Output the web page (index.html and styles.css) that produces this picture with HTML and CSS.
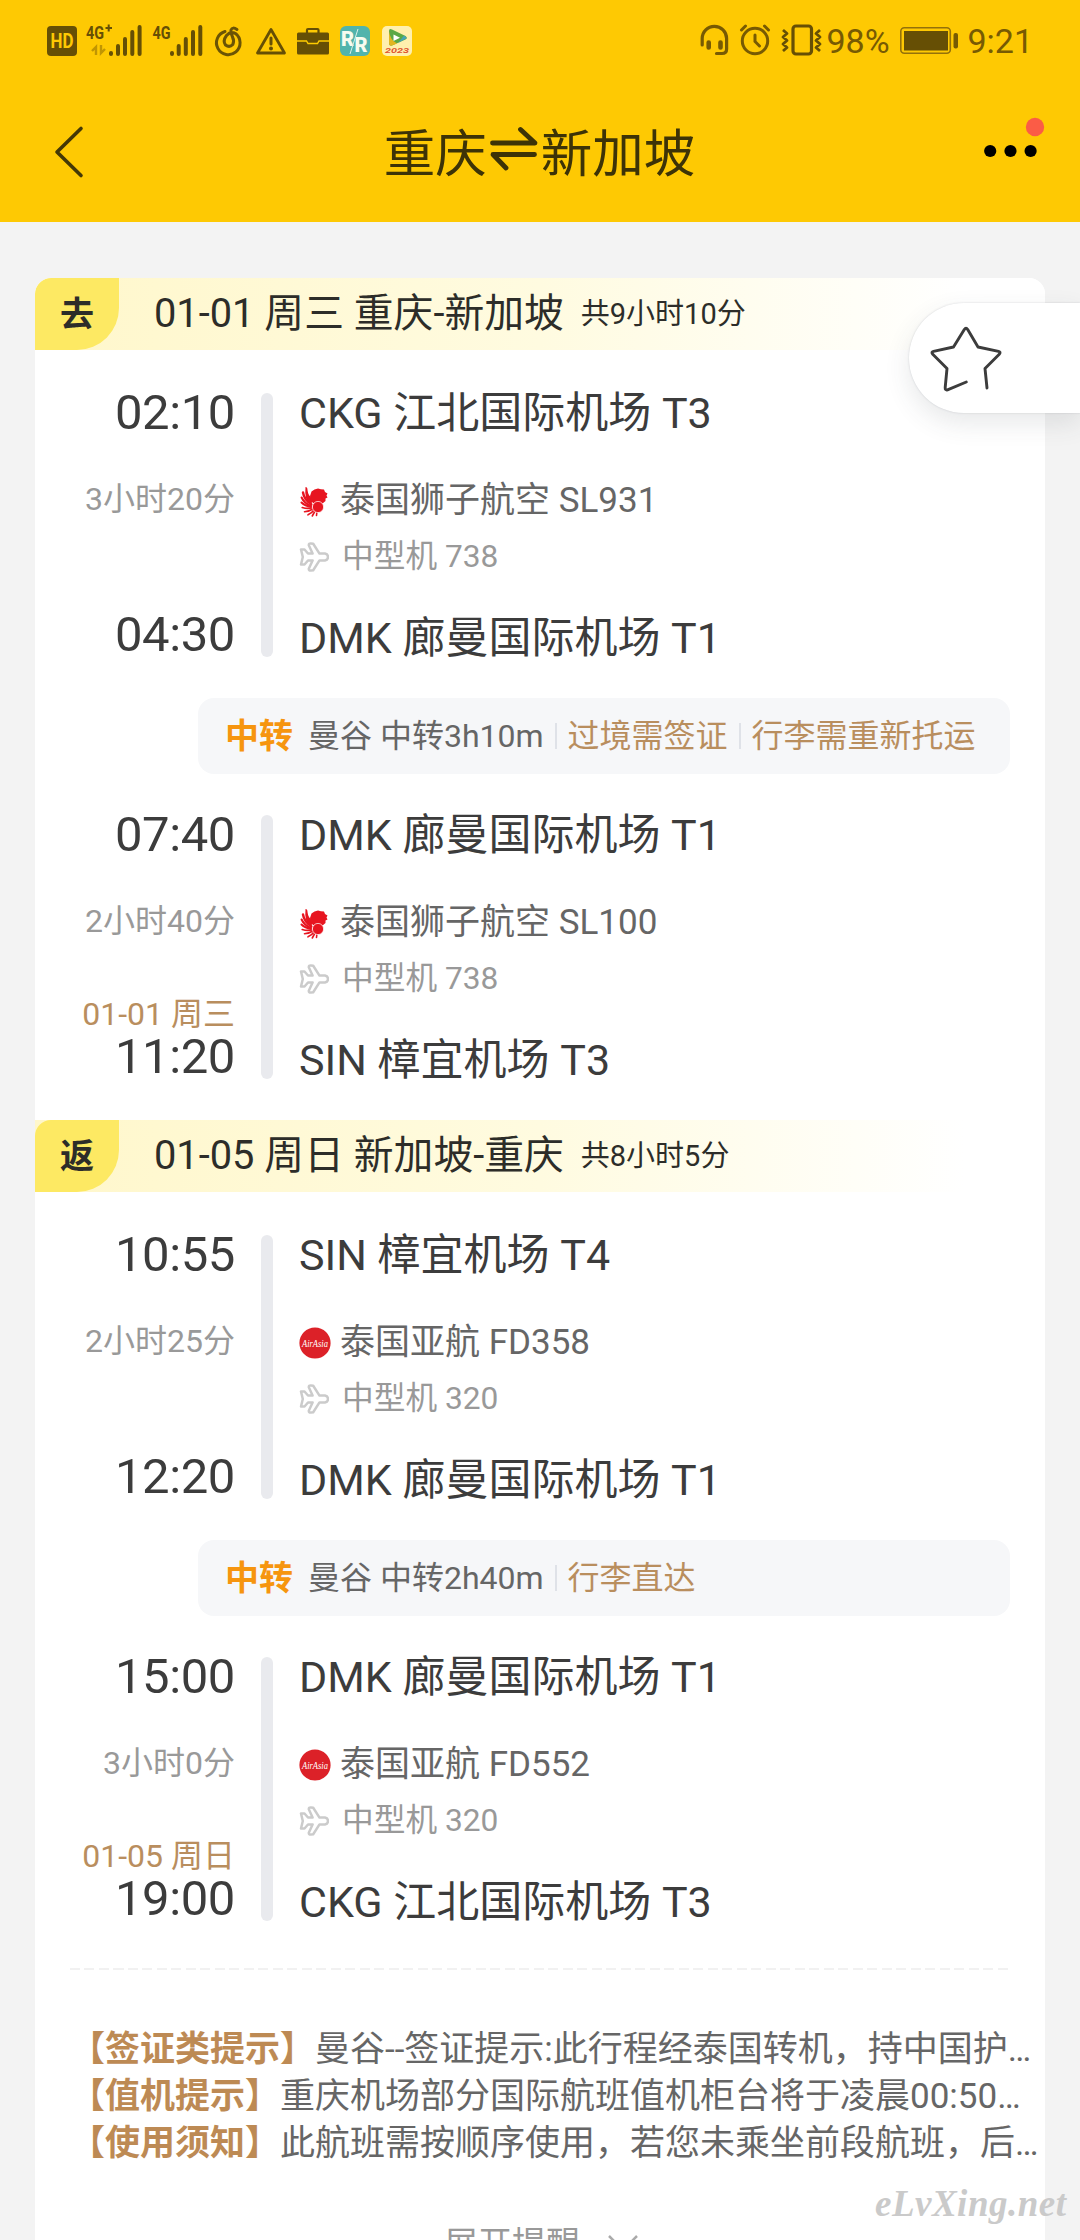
FILE: index.html
```html
<!DOCTYPE html>
<html lang="zh-CN">
<head>
<meta charset="utf-8">
<title>重庆⇌新加坡</title>
<link rel="stylesheet" href="styles.css">
</head>
<body>
<svg class="defs" width="0" height="0">
  <symbol id="plane" viewBox="0 0 30 30">
    <path d="M2 7.5 L5.5 7.5 L9 11.5 L13.6 11.5 L9.8 3.2 Q9.6 1.3 12 1.5 L14.2 1.8 L20.5 11.6 L26 11.6 Q29 12.2 29 15 Q29 17.8 26 18.4 L20.5 18.4 L14.2 28.2 L12 28.5 Q9.6 28.7 9.8 26.8 L13.6 18.5 L9 18.5 L5.5 22.5 L2 22.5 L3.8 15 Z" fill="none" stroke="#cbcbcb" stroke-width="2.5" stroke-linejoin="round"/>
  </symbol>
  <symbol id="lion" viewBox="0 0 30 32">
    <path d="M6.500 2Q8.500 2 8.500 5Q9 11 14 14L12 20Q5 15 6.500 2Z" fill="#e71520"/>
    <g fill="none" stroke="#e71520" stroke-linecap="round">
      <path d="M4 7.500Q5 14.500 12.500 19.500" stroke-width="2.400"/>
      <path d="M2.600 12.500Q5 18 12 21" stroke-width="2"/>
      <path d="M2.400 17.500Q6 21 12 22" stroke-width="1.800"/>
      <path d="M3.200 22.500Q8 24 13 23" stroke-width="1.600"/>
      <path d="M5.500 26.800Q10 26.500 14 24" stroke-width="1.600"/>
      <path d="M9 29.800Q13 28 15 25" stroke-width="1.600"/>
      <path d="M13.300 31L16 26" stroke-width="1.600"/>
      <path d="M17.500 30.500L18 26" stroke-width="1.600"/>
    </g>
    <path d="M11 11L12.500 6.500L15.500 4.500L19 3.500L22 4.200L25 4.500L26 7L28.500 8.500L27.500 10.500L28.500 12.500L26.500 13.500L26.500 16L23.500 18.500L14 18L11.500 15Z" fill="#e71520"/>
    <circle cx="19" cy="22" r="5.600" fill="#e71520" stroke="#fff" stroke-width=".7"/>
  </symbol>
  <symbol id="airasia" viewBox="0 0 32 32">
    <circle cx="16" cy="16" r="15.6" fill="#dc2128"/>
    <text x="16" y="19.500" class="airasia-word" text-anchor="middle" textLength="26" lengthAdjust="spacingAndGlyphs">AirAsia</text>
  </symbol>
</svg>

<header class="header">
  <div class="status">
    <div class="status-left">
      <svg width="35" height="36" viewBox="47 22 35 36"><rect x="47" y="26" width="30" height="30" rx="4" fill="#664f05"/><text x="62" y="47.5" class="hd" text-anchor="middle" textLength="23" lengthAdjust="spacingAndGlyphs">HD</text></svg>
      <svg width="67" height="36" viewBox="82 22 67 36"><text x="86" y="38.5" class="net" textLength="18" lengthAdjust="spacingAndGlyphs">4G</text><path d="M105.500 28h6.500M108.700 24.500v7" stroke="#664f05" stroke-width="2"/><path d="M92 51l4-4v8M105 49l-4 4v-8" fill="none" stroke="#c09503" stroke-width="2.400"/><path d="M111 53v1M118 46v8M125 39v15M132.300 32v22M139.600 27v27" stroke="#664f05" stroke-width="4" stroke-linecap="round"/></svg>
      <svg width="61" height="36" viewBox="149 22 61 36"><text x="152.500" y="38.500" class="net" textLength="18" lengthAdjust="spacingAndGlyphs">4G</text><path d="M172 53v1M178.700 46v8M185.800 39v15M193 32v22M200.300 27v27" stroke="#664f05" stroke-width="4" stroke-linecap="round"/></svg>
      <svg width="38" height="36" viewBox="210 22 38 36"><path d="M225 31.500A11.800 11.800 0 1 0 235.500 33.500Q230.500 31 226.500 35.500Q222.500 41 225.500 45Q229.500 48 232.800 44.500Q234.500 41 232.500 37Q230.500 32 231 30Q232.500 26.500 237 29.500" fill="none" stroke="#6b5405" stroke-width="3" stroke-linecap="round"/></svg>
      <svg width="44" height="36" viewBox="248 22 44 36"><path d="M271 29.500L284.500 53H257.500Z" fill="none" stroke="#664f05" stroke-width="2.800" stroke-linejoin="round"/><path d="M271 38v6" stroke="#664f05" stroke-width="3" stroke-linecap="round"/><circle cx="271" cy="48.500" r="2" fill="#664f05"/></svg>
      <svg width="42" height="36" viewBox="292 22 42 36"><path d="M307 33v-3q0-1 1-1h9.500q1 0 1 1v3" fill="none" stroke="#664f05" stroke-width="2.200"/><rect x="297" y="32.500" width="32" height="22" rx="1.500" fill="#664f05"/><path d="M297 41h9.500l1.500 2.500h9.500l1.500-2.500H329" fill="none" stroke="#fc0" stroke-width="1.400"/></svg>
      <svg width="42" height="36" viewBox="334 22 42 36"><rect x="340" y="26" width="30" height="30" rx="6" fill="#51b4ac"/><text x="341" y="46" class="rr">R</text><text x="354.500" y="51.500" class="rr">R</text><path d="M358 29L350 54" stroke="#d8f0ea" stroke-width="1"/></svg>
      <svg width="42" height="36" viewBox="376 22 42 36"><rect x="382" y="26" width="30" height="30" rx="5" fill="#fff0ae"/><path d="M389 31Q389 28 392 29.500L405.500 36Q408 38 405.500 39.500L392 45.500Q389 46.500 389 43Z" fill="#5ba845"/><path d="M389 31Q390 40 397 43.500L392 45.500Q389 46.500 389 43Z" fill="#e2b620"/><path d="M404 35.500L407 38L398 43Z" fill="#45a5b4"/><path d="M393.500 34.500L400 37.800L393.500 41Z" fill="#fff"/><text x="385" y="53" class="mini" textLength="24" lengthAdjust="spacingAndGlyphs">2023</text></svg>
    </div>
    <div class="status-right">
      <svg width="39" height="36" viewBox="697 22 39 36"><path d="M704.200 45V38.500A12.200 12.200 0 0 1 728.600 38.500V49Q728.600 53.500 724 53.500H718.500" fill="none" stroke="#775a03" stroke-width="3.200" stroke-linecap="round"/><path d="M710.700 42.500v5M722.500 42.500v5" stroke="#775a03" stroke-width="4.600" stroke-linecap="round"/></svg>
      <svg width="42" height="36" viewBox="736 22 42 36"><circle cx="757" cy="41" r="12.700" fill="none" stroke="#775a03" stroke-width="3"/><path d="M757 35v6.500l4.500 4.500M743.500 30l4-4M770.500 30l-4-4" fill="none" stroke="#775a03" stroke-width="3" stroke-linecap="round"/></svg>
      <svg width="50" height="36" viewBox="778 22 50 36"><rect x="795" y="26" width="18.500" height="28" rx="3" fill="none" stroke="#664f05" stroke-width="3.200"/><path d="M785 30l4 3.500-4 3.500 4 3.500-4 3.500 4 3.500-4 3.500M822 30l-4 3.500 4 3.500-4 3.500 4 3.500-4 3.500 4 3.500" fill="none" stroke="#664f05" stroke-width="2.800" stroke-linejoin="round"/></svg>
      <span class="status-text percent">98%</span>
      <svg width="72" height="36" viewBox="896 22 72 36"><rect x="901.800" y="27.800" width="49.500" height="25.500" rx="3.500" fill="none" stroke="#94710a" stroke-width="1.600"/><rect x="905" y="31" width="44" height="19.500" fill="#664f05"/><rect x="954.500" y="33" width="4.500" height="15.500" rx="2" fill="#775a03"/></svg>
      <span class="status-text">9:21</span>
    </div>
  </div>
  <nav class="nav">
    <svg class="back" width="34" height="56" viewBox="53 124 34 56"><path d="M81 128.500L57 152L81 175.500" fill="none" stroke="#443806" stroke-width="3.600" stroke-linecap="round" stroke-linejoin="round"/></svg>
    <h1 class="title">重庆<svg width="54" height="50" viewBox="488 127 54 50"><path d="M493.500 146H536L521.500 132.500M535.500 157.500H494L507 171" fill="none" stroke="#3d3307" stroke-width="4.800" stroke-linecap="round" stroke-linejoin="round"/></svg>新加坡</h1>
    <svg class="more" width="66" height="56" viewBox="980 112 66 56"><circle cx="990.200" cy="151" r="6.100"/><circle cx="1010.500" cy="151" r="6.100"/><circle cx="1030.600" cy="151" r="6.100"/><circle cx="1035" cy="127" r="9.200" fill="#fb5c46"/></svg>
  </nav>
</header>

<main class="card">
  <section class="trip">
    <div class="strip"><span class="tag">去</span><h2 class="route">01-01 周三 重庆-新加坡</h2><span class="total">共9小时10分</span></div>
    <div class="segment">
      <div class="times"><span class="time">02:10</span><span class="duration">3小时20分</span><span class="arrive"><span class="time">04:30</span></span></div>
      <div class="bar"></div>
      <div class="info"><span class="airport">CKG 江北国际机场 T3</span><span class="airline"><svg class="logo lion"><use href="#lion"/></svg>泰国狮子航空 SL931</span><span class="craft"><svg class="plane"><use href="#plane"/></svg>中型机 738</span><span class="airport last">DMK 廊曼国际机场 T1</span></div>
    </div>
    <div class="transfer"><b>中转</b><span class="via">曼谷 中转3h10m</span><span class="remark">过境需签证</span><span class="remark">行李需重新托运</span></div>
    <div class="segment">
      <div class="times"><span class="time">07:40</span><span class="duration">2小时40分</span><span class="arrive"><span class="date">01-01 周三</span><span class="time">11:20</span></span></div>
      <div class="bar"></div>
      <div class="info"><span class="airport">DMK 廊曼国际机场 T1</span><span class="airline"><svg class="logo lion"><use href="#lion"/></svg>泰国狮子航空 SL100</span><span class="craft"><svg class="plane"><use href="#plane"/></svg>中型机 738</span><span class="airport last">SIN 樟宜机场 T3</span></div>
    </div>
  </section>
  <section class="trip">
    <div class="strip"><span class="tag">返</span><h2 class="route">01-05 周日 新加坡-重庆</h2><span class="total">共8小时5分</span></div>
    <div class="segment">
      <div class="times"><span class="time">10:55</span><span class="duration">2小时25分</span><span class="arrive"><span class="time">12:20</span></span></div>
      <div class="bar"></div>
      <div class="info"><span class="airport">SIN 樟宜机场 T4</span><span class="airline"><svg class="logo"><use href="#airasia"/></svg>泰国亚航 FD358</span><span class="craft"><svg class="plane"><use href="#plane"/></svg>中型机 320</span><span class="airport last">DMK 廊曼国际机场 T1</span></div>
    </div>
    <div class="transfer"><b>中转</b><span class="via">曼谷 中转2h40m</span><span class="remark">行李直达</span></div>
    <div class="segment">
      <div class="times"><span class="time">15:00</span><span class="duration">3小时0分</span><span class="arrive"><span class="date">01-05 周日</span><span class="time">19:00</span></span></div>
      <div class="bar"></div>
      <div class="info"><span class="airport">DMK 廊曼国际机场 T1</span><span class="airline"><svg class="logo"><use href="#airasia"/></svg>泰国亚航 FD552</span><span class="craft"><svg class="plane"><use href="#plane"/></svg>中型机 320</span><span class="airport last">CKG 江北国际机场 T3</span></div>
    </div>
  </section>
  <div class="divider"></div>
  <div class="notices">
    <p><b>【签证类提示】</b>曼谷--签证提示:此行程经泰国转机，持中国护…</p>
    <p><b>【值机提示】</b>重庆机场部分国际航班值机柜台将于凌晨00:50…</p>
    <p><b>【使用须知】</b>此航班需按顺序使用，若您未乘坐前段航班，后…</p>
  </div>
  <div class="expand">展开提醒<svg width="34" height="24" viewBox="0 0 34 24"><path d="M3 4L17 18L31 4" fill="none" stroke="#aaa" stroke-width="2.500"/></svg></div>
</main>

<button class="favorite" aria-label="收藏"><svg width="76" height="70" viewBox="928 322 76 70"><path d="M966.300 381L947.500 388.800Q945 389.500 945.200 386.500L947 367.500L932.500 353Q931 351 933.500 350.300L953.500 346L964.300 328.500Q966 326 967.700 328.500L978 346L998.500 350.300Q1001 351 999.500 353L985 367.500L987 387" fill="none" stroke="#3c3c3c" stroke-width="2.900" stroke-linecap="round" stroke-linejoin="round"/></svg></button>
<div class="watermark">eLvXing.net</div>
</body>
</html>
```
FILE: styles.css
```css
* { box-sizing: border-box; }
html, body { margin: 0; height: 2240px; overflow: hidden; }
body {
  position: relative;
  width: 1080px;
  background: #f3f3f3;
  color: #3c3c3c;
  font-family: Roboto, "Noto Sans CJK SC", sans-serif;
}
svg { display: block; flex: none; }
h1, h2, p { margin: 0; font-weight: 400; }
.defs { position: absolute; }

.header { height: 222px; background: #fec903; }
.status { display: flex; justify-content: space-between; padding: 22px 47px 0 47px; height: 58px; }
.status-left, .status-right { display: flex; height: 36px; }
.status-text { font-size: 34px; line-height: 38px; color: #775a03; white-space: nowrap; }
.percent { width: 69px; }
.hd { font: 700 20px Roboto, sans-serif; fill: #fec903; }
.net { font: 700 19px Roboto, sans-serif; fill: #664f05; }
.rr { font: 900 20px Roboto, sans-serif; fill: #f7fcef; }
.mini { font: italic 700 7px Roboto, sans-serif; fill: #df5630; }
.airasia-word { font: italic 400 11px "Liberation Serif", serif; fill: #fff; }

.nav { display: flex; justify-content: space-between; align-items: flex-start; padding: 54px 34px 0 53px; }
.back { margin-top: 12px; }
.title { display: flex; align-items: center; height: 74px; margin-left: 12px; font-size: 51.500px; color: #3d3307; }
.more { fill: #000; }

.card { width: 1010px; height: 1962px; margin: 56px 35px 0; background: #fff; border-radius: 16px 16px 0 0; overflow: hidden; }
.trip { padding-bottom: 41px; }
.strip { display: flex; align-items: center; height: 72px; background: linear-gradient(90deg, #fff7cb, #fffbe0 50%, #fff 92%); color: #2d2d29; }
.tag { width: 84px; height: 72px; border-radius: 16px 0 42px 0; background: #fde963; font-size: 34px; font-weight: 700; line-height: 72px; text-align: center; }
.route { margin-left: 35px; font-size: 39.800px; line-height: 72px; white-space: nowrap; }
.total { margin-left: 17px; font-size: 29px; line-height: 74px; }

.segment { display: flex; height: 264px; margin-top: 41px; }
.strip + .segment { margin-top: 43px; }
.times { display: flex; flex-direction: column; width: 200px; text-align: right; }
.time { display: block; font-size: 49px; line-height: 39px; letter-spacing: -.4px; }
.duration { margin-top: 47px; font-size: 32px; line-height: 40px; color: #999; }
.arrive { margin-top: auto; }
.date { display: block; font-size: 32px; line-height: 40px; color: #b98e5e; }
.arrive .time { line-height: 45px; }
.bar { width: 12px; margin: 0 26px; border-radius: 6px; background: #e9eaee; }
.info { display: flex; flex-direction: column; white-space: nowrap; }
.airport { font-size: 43px; line-height: 40px; }
.airline { display: flex; align-items: center; height: 40px; margin-top: 48px; font-size: 35px; line-height: 40px; color: #666; }
.logo { width: 32px; height: 32px; margin-right: 9px; }
.lion { margin-left: -1px; margin-right: 10px; }
.craft { display: flex; align-items: center; height: 40px; margin-top: 16px; font-size: 31.700px; line-height: 40px; color: #999; }
.plane { width: 30px; height: 30px; margin-right: 13px; }
.last { margin-top: 41px; }

.transfer { display: flex; align-items: center; width: 812px; height: 76px; margin: 41px 0 0 163px; padding-left: 27px; border-radius: 16px; background: #f6f7f9; font-size: 32px; line-height: 76px; white-space: nowrap; }
.transfer b { margin-right: 15px; font-size: 34px; color: #f6950f; }
.via { color: #666; }
.remark { display: flex; align-items: center; color: #b98e5e; }
.remark::before { content: ""; width: 2px; height: 26px; margin: 0 11px; background: #dfe2e8; }

.divider { height: 2px; margin: 6px 35px 0; background: repeating-linear-gradient(90deg, #f1f1f1 0 10px, transparent 10px 14.500px); }
.notices { padding: 56px 0 0 35px; font-size: 35px; line-height: 47px; color: #666; white-space: nowrap; }
.notices b { color: #bd8a54; }
.expand { display: flex; align-items: center; justify-content: center; gap: 26px; margin: 55px 0 0 4px; font-size: 34px; line-height: 44px; color: #999; }

.favorite { position: absolute; top: 303px; right: 0; display: flex; align-items: center; width: 171px; height: 110px; padding: 0 0 0 19px; border: 0; border-radius: 55px 0 0 55px; background: #fff; box-shadow: 0 10px 26px rgba(60, 65, 75, .12), 0 0 2px rgba(90, 100, 120, .25); }
.watermark { position: absolute; left: 875px; top: 2180px; font: italic 700 37px/48px "Liberation Serif", serif; letter-spacing: .5px; color: #cacaca; white-space: nowrap; }
```
